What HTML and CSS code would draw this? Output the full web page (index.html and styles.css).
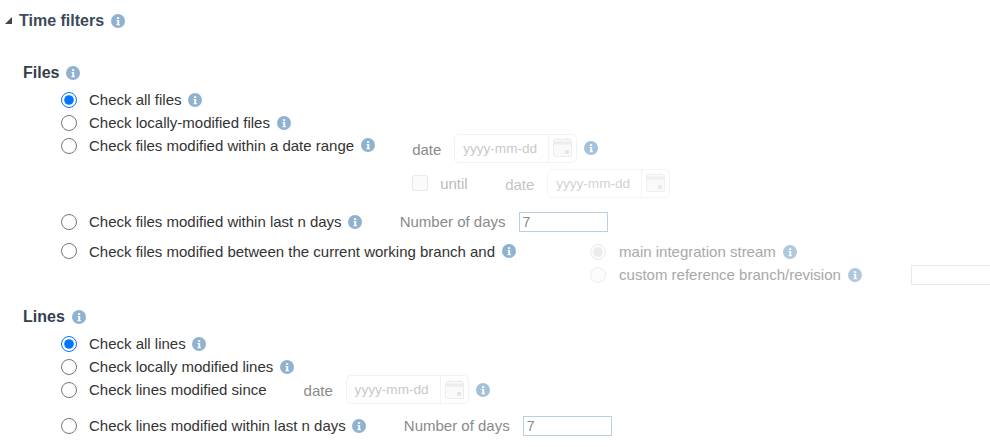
FILE: index.html
```html
<!DOCTYPE html>
<html lang="en">
<head>
    <meta charset="UTF-8">
    <title>Time filters</title>
    <link rel="stylesheet" href="styles.css">
</head>
<body>
    <svg class="defs" width="0" height="0">
        <symbol id="info" viewBox="0 0 14 14">
            <circle cx="7" cy="7" r="7" fill="#8fb2d0"/>
            <path d="M6 3.2h2.2v1.9H6zM5.600 6h2.600v4.200h.8v1H5.400v-1h.9V7h-.7z" fill="#fff"/>
        </symbol>
        <symbol id="calendar" viewBox="0 0 19 20">
            <path d="M4.500 0v3M14.500 0v3" stroke="#ececec" stroke-width="2" fill="none"/>
            <rect x=".5" y="1.500" width="18" height="17" rx="1.500" fill="#fafafa" stroke="#ececec"/>
            <path d="M1 5h17" stroke="#ececec" stroke-width="3"/>
            <rect x="12" y="12" width="4" height="4" fill="#e6e6e6"/>
        </symbol>
    </svg>

    <div class="panel">
        <div class="section-title">
            <span class="caret"></span>
            <span>Time filters</span>
            <svg class="info"><use href="#info"/></svg>
        </div>

        <div class="group files-group">
            <div class="group-title">Files <svg class="info"><use href="#info"/></svg></div>
            <div class="option">
                <input type="radio" name="files" checked>
                <label>Check all files</label>
                <svg class="info"><use href="#info"/></svg>
            </div>
            <div class="option">
                <input type="radio" name="files">
                <label>Check locally-modified files</label>
                <svg class="info"><use href="#info"/></svg>
            </div>
            <div class="option option-range">
                <input type="radio" name="files">
                <label>Check files modified within a date range</label>
                <svg class="info"><use href="#info"/></svg>
                <div class="range">
                    <div class="range-row from-row">
                        <span class="date-label">date</span>
                        <div class="date-input"><span class="date-text">yyyy-mm-dd</span><span class="date-btn"><svg class="cal"><use href="#calendar"/></svg></span></div>
                        <svg class="info"><use href="#info"/></svg>
                    </div>
                    <div class="range-row until-row">
                        <input type="checkbox" disabled>
                        <span class="until-label">until</span>
                        <span class="date-label">date</span>
                        <div class="date-input"><span class="date-text">yyyy-mm-dd</span><span class="date-btn"><svg class="cal"><use href="#calendar"/></svg></span></div>
                    </div>
                </div>
            </div>
            <div class="option option-days">
                <input type="radio" name="files">
                <label>Check files modified within last n days</label>
                <svg class="info"><use href="#info"/></svg>
                <span class="days-label">Number of days</span>
                <input class="days-input" type="text" value="7">
            </div>
            <div class="option option-branch">
                <input type="radio" name="files">
                <label>Check files modified between the current working branch and</label>
                <svg class="info"><use href="#info"/></svg>
                <div class="branch-list">
                    <div class="branch-row">
                        <input type="radio" name="branch" checked disabled>
                        <span>main integration stream</span>
                        <svg class="info"><use href="#info"/></svg>
                    </div>
                    <div class="branch-row">
                        <input type="radio" name="branch" disabled>
                        <span>custom reference branch/revision</span>
                        <svg class="info"><use href="#info"/></svg>
                        <input class="branch-input" type="text">
                    </div>
                </div>
            </div>
        </div>

        <div class="group lines-group">
            <div class="group-title">Lines <svg class="info"><use href="#info"/></svg></div>
            <div class="option">
                <input type="radio" name="lines" checked>
                <label>Check all lines</label>
                <svg class="info"><use href="#info"/></svg>
            </div>
            <div class="option">
                <input type="radio" name="lines">
                <label>Check locally modified lines</label>
                <svg class="info"><use href="#info"/></svg>
            </div>
            <div class="option option-since">
                <input type="radio" name="lines">
                <label>Check lines modified since</label>
                <span class="date-label">date</span>
                <div class="date-input"><span class="date-text">yyyy-mm-dd</span><span class="date-btn"><svg class="cal"><use href="#calendar"/></svg></span></div>
                <svg class="info"><use href="#info"/></svg>
            </div>
            <div class="option option-days option-days-lines">
                <input type="radio" name="lines">
                <label>Check lines modified within last n days</label>
                <svg class="info"><use href="#info"/></svg>
                <span class="days-label">Number of days</span>
                <input class="days-input" type="text" value="7">
            </div>
        </div>
    </div>
</body>
</html>
```

FILE: styles.css
```css
* { box-sizing: border-box; }
html, body { margin: 0; padding: 0; height: 447px; overflow: hidden; }
body { background: #fff; font-family: "Liberation Sans", Arial, sans-serif; font-size: 15px; color: #333; }
input { margin: 0; font-family: inherit; }
.defs { position: absolute; }

.panel { width: 990px; padding-top: 11px; overflow: hidden; }

.info { width: 14px; height: 14px; flex: none; margin-left: 7px; }

.section-title { display: flex; align-items: center; height: 19px; padding-left: 5px; font-size: 16px; font-weight: bold; color: #3b4a5a; }
.caret { width: 0; height: 0; margin-right: 7px; border-style: solid; border-width: 0 0 7px 7px; border-color: transparent transparent #444 transparent; }

.group { padding-left: 23px; }
.files-group { margin-top: 33px; }
.lines-group { margin-top: 21px; }
.group-title { display: flex; align-items: center; height: 20px; margin-bottom: 5px; font-size: 16px; font-weight: bold; color: #333f4d; }

.option { display: flex; align-items: center; min-height: 23px; padding-left: 38px; white-space: nowrap; }
.option > input[type="radio"] { flex: none; width: 16px; height: 16px; margin-right: 12px; }
.group-title + .option > .info { margin-left: 6px; }

.option-range { align-items: flex-start; min-height: 62px; }
.option-range > input[type="radio"] { margin-top: 4px; }
.option-range > label { line-height: 23px; }
.option-range > .info { margin-top: 4px; }
.range { margin-left: 37px; margin-top: -1px; }
.range-row { display: flex; align-items: center; height: 30px; }
.until-row { margin-top: 5px; color: #bbb; }
.until-row input { width: 16px; height: 16px; margin-right: 12px; opacity: .45; }
.until-label { width: 65px; }
.until-row .date-label { color: #c4c4c4; }
.until-row .date-input { opacity: .8; }

.date-label { width: 42px; padding-top: 2px; color: #8a8a8a; }
.date-input { display: flex; align-items: stretch; width: 123px; height: 29px; border: 1px solid #f2f2f2; border-radius: 5px; color: #c9c9c9; }
.date-text { flex: 1; padding-left: 8px; font-size: 13.600px; line-height: 27px; white-space: nowrap; }
.date-btn { display: flex; align-items: center; justify-content: center; width: 28px; border-left: 1px solid #f2f2f2; }
.cal { width: 19px; height: 20px; }
.from-row .info, .option-since .info { opacity: .8; }

.option-days { margin-top: 12px; }
.option-days > .info { margin-left: 6px; }
.days-label { margin-left: 38px; color: #8a8a8a; }
.days-input { flex: none; width: 89px; height: 20px; margin-left: 13px; padding: 0 3px; border: 1px solid #b9cfe6; border-radius: 0; font-size: 14px; color: #888; background: #fff; }

.option-branch { align-items: flex-start; margin-top: 7px; }
.option-branch > input[type="radio"] { margin-top: 3px; }
.option-branch > label { line-height: 23px; }
.option-branch > .info { margin-top: 4px; }
.branch-list { margin-left: 74px; color: #a8a8a8; }
.branch-row { display: flex; align-items: center; height: 23px; }
.branch-row input[type="radio"] { flex: none; width: 16px; height: 16px; margin-right: 13px; opacity: .4; }
.branch-row .info { opacity: .7; }
.branch-input { flex: none; width: 90px; height: 20px; margin-left: 49px; border: 1px solid #e2ebf4; background: #fff; }

.option-since .date-label { margin-left: 37px; }
.option-since .date-input { margin: -3px 0; }
.option-days-lines { margin-top: 13px; }
```
